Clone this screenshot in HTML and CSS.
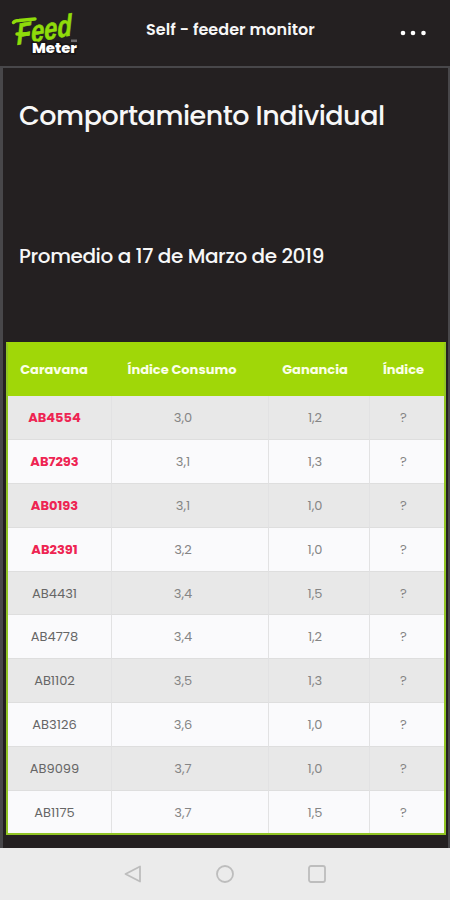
FILE: index.html
```html
<!DOCTYPE html>
<html lang="es">
  <head>
    <meta charset="utf-8"/>
    <meta name="viewport" content="width=device-width, initial-scale=1">
    <title>Feed Meter</title>
    <link rel="stylesheet" href="styles.css">
  </head>
<body>

<div class="header">
  <svg class="logo" width="76" height="60" viewBox="0 0 76 60">
    <text class="logo_feed" transform="translate(7 45) rotate(-10) skewX(-8)" textLength="56" lengthAdjust="spacingAndGlyphs">Feed</text>
    <path class="logo_swash" d="M3.500 22.500 Q5 20.500 9 20.500 L25 19"/>
    <path class="logo_swash" d="M7 34 H18"/>
    <text class="logo_meter" x="22" y="53" textLength="45" lengthAdjust="spacingAndGlyphs">Meter</text>
    <rect class="logo_mark" x="61" y="39.500" width="6" height="2.500"/>
  </svg>
  <div class="app_name"><span>Self - feeder monitor</span></div>
  <svg class="menu" width="28" height="8" viewBox="0 0 28 8">
    <circle cx="4" cy="4" r="2.3"/>
    <circle cx="14" cy="4" r="2.3"/>
    <circle cx="24.500" cy="4" r="2.3"/>
  </svg>
</div>

<div class="content">
  <h1><span>Comportamiento Individual</span></h1>
  <h2><span>Promedio a 17 de Marzo de 2019</span></h2>
  <table>
    <colgroup>
      <col class="col_tag">
      <col class="col_intake">
      <col class="col_gain">
      <col class="col_index">
    </colgroup>
    <thead>
      <tr><th>Caravana</th><th>Índice Consumo</th><th>Ganancia</th><th>Índice</th></tr>
    </thead>
    <tbody>
      <tr class="alert"><td>AB4554</td><td>3,0</td><td>1,2</td><td>?</td></tr>
      <tr class="alert"><td>AB7293</td><td>3,1</td><td>1,3</td><td>?</td></tr>
      <tr class="alert"><td>AB0193</td><td>3,1</td><td>1,0</td><td>?</td></tr>
      <tr class="alert"><td>AB2391</td><td>3,2</td><td>1,0</td><td>?</td></tr>
      <tr><td>AB4431</td><td>3,4</td><td>1,5</td><td>?</td></tr>
      <tr><td>AB4778</td><td>3,4</td><td>1,2</td><td>?</td></tr>
      <tr><td>AB1102</td><td>3,5</td><td>1,3</td><td>?</td></tr>
      <tr><td>AB3126</td><td>3,6</td><td>1,0</td><td>?</td></tr>
      <tr><td>AB9099</td><td>3,7</td><td>1,0</td><td>?</td></tr>
      <tr><td>AB1175</td><td>3,7</td><td>1,5</td><td>?</td></tr>
    </tbody>
  </table>
</div>

<div class="navbar">
  <svg width="20" height="20" viewBox="0 0 20 20"><path d="M17 2.500 V17.500 L2.500 10 Z"/></svg>
  <svg width="20" height="20" viewBox="0 0 20 20"><circle cx="10" cy="10" r="8"/></svg>
  <svg width="20" height="20" viewBox="0 0 20 20"><rect x="2" y="2" width="16" height="16" rx="2"/></svg>
</div>

</body>
</html>
```

FILE: styles.css
```css
* {
  box-sizing: border-box;
}

body {
  margin: 0;
  height: 900px;
  display: flex;
  flex-direction: column;
  overflow: hidden;
  font-family: Poppins, Inter, sans-serif;
  background-color: #242021;
  color: #f7f7f7;
}

.header {
  height: 66px;
  display: flex;
  align-items: flex-start;
  padding-left: 10px;
}

.logo {
  overflow: visible;
}

.logo_feed {
  font-family: "Liberation Sans", sans-serif;
  font-size: 30px;
  font-weight: bold;
  font-style: italic;
  fill: #8fdc0a;
  stroke: #8fdc0a;
  stroke-width: 0.6;
}

.logo_swash {
  fill: none;
  stroke: #8fdc0a;
  stroke-width: 3.5;
  stroke-linecap: round;
}

.logo_meter {
  font-size: 14px;
  font-weight: 800;
  fill: #fff;
  stroke: #171415;
  stroke-width: 3;
  paint-order: stroke;
}

.logo_mark {
  fill: #6b686a;
}

.app_name {
  margin: 19px 0 0 60px;
  width: 180px;
  font-size: 16px;
  line-height: 22px;
  font-weight: 600;
  letter-spacing: 0.05px;
  white-space: nowrap;
}

.menu {
  margin: 29px 0 0 73px;
  fill: #fff;
}

.content {
  height: 782px;
  padding-left: 3px;
  border: solid #48474a;
  border-width: 2px 2px 0 3px;
}

h1 {
  margin: 28px 0 0 13px;
  font-size: 27px;
  line-height: 40px;
  font-weight: 500;
  letter-spacing: -0.5px;
  white-space: nowrap;
}

h2 {
  margin: 106px 0 0 13px;
  font-size: 20px;
  line-height: 28px;
  font-weight: 500;
  letter-spacing: -0.4px;
  white-space: nowrap;
}

table {
  width: 440px;
  height: 493px;
  margin-top: 72px;
  table-layout: fixed;
  border: 2px solid #91c424;
  border-top-color: #a0d708;
  border-collapse: separate;
  border-spacing: 0;
  color: #858585;
  font-size: 13px;
}

.col_tag {
  width: 104px;
}

.col_intake {
  width: 157px;
}

.col_gain {
  width: 101px;
}

th {
  height: 52px;
  padding: 0 12px 0 0;
  background-color: #a0d708;
  color: #fbffe8;
  font-weight: 700;
  white-space: nowrap;
}

td {
  padding: 1px 10px 0 0;
  text-align: center;
  border-right: 1px solid #e2e2e3;
  border-bottom: 1px solid #dedede;
  background-color: #fafafc;
}

th:nth-child(2) {
  padding-right: 17px;
}

td:nth-child(2) {
  padding-right: 14px;
}

th:nth-child(3) {
  padding-right: 9px;
}

td:nth-child(3) {
  padding-right: 8px;
}

th:nth-child(4), td:nth-child(4) {
  padding-right: 7px;
}

td:first-child {
  color: #666;
}

td:last-child {
  border-right: none;
}

tbody tr:nth-child(odd) td {
  background-color: #e8e8e8;
}

tbody tr:last-child td {
  border-bottom: none;
}

.alert td:first-child {
  color: #ee2452;
  font-weight: 700;
}

.navbar {
  height: 52px;
  display: flex;
  justify-content: center;
  align-items: center;
  gap: 72px;
  background-color: #ebebeb;
}

.navbar svg {
  fill: none;
  stroke: #bdbdbd;
  stroke-width: 1.8;
  stroke-linejoin: round;
}
```
